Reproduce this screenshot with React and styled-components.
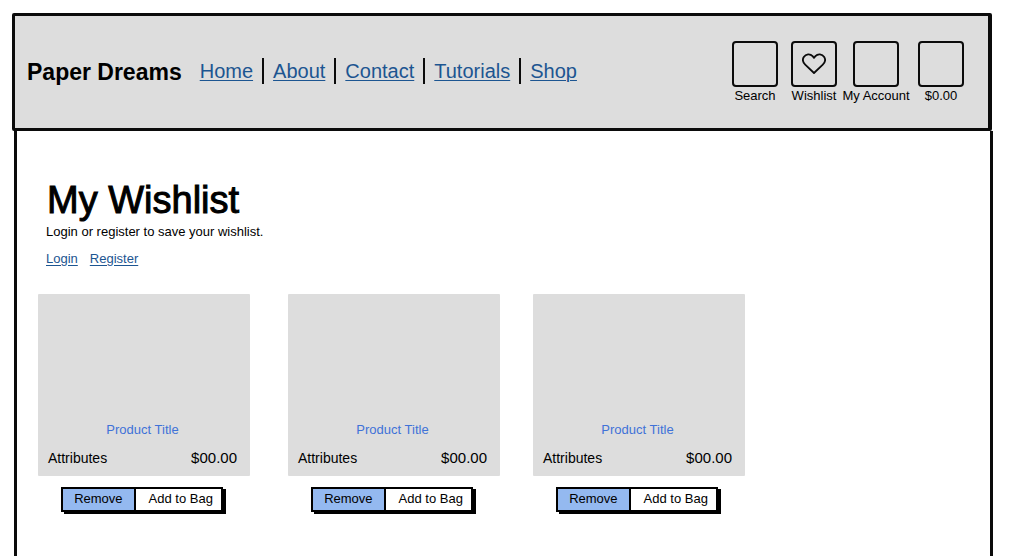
import React from "react";
import styled, { createGlobalStyle } from "styled-components";

const ink = "#0b0b0b";
const panel = "#dddddd";
const link = "#1c5591";

const GlobalStyle = createGlobalStyle`
  *, *::before, *::after { box-sizing: border-box; }
  body {
    margin: 0;
    background: #fff;
    color: #000;
    font-family: "Liberation Sans", Arial, sans-serif;
    font-size: 13px;
    line-height: 16px;
  }
`;

const Page = styled.div`
  display: flex;
  flex-direction: column;
  min-height: 100vh;
  padding: 13px 24px 0 12px;
`;

const Header = styled.header`
  display: flex;
  flex-wrap: wrap;
  align-items: flex-start;
  justify-content: space-between;
  padding: 25px 14px 24px 12px;
  border: 3px solid ${ink};
  border-right-width: 4px;
  border-radius: 2px;
  background: ${panel};
`;

const Masthead = styled.div`
  display: flex;
  flex-wrap: wrap;
  align-items: flex-start;
  gap: 18px;
  padding-top: 17px;
`;

const Brand = styled.span`
  font-size: 23px;
  line-height: 28px;
  font-weight: 700;
`;

const Nav = styled.nav`
  display: flex;
  flex-wrap: wrap;
`;

const NavLink = styled.a`
  font-size: 20px;
  line-height: 26px;
  color: ${link};
  text-decoration: underline;
  text-decoration-thickness: 1px;
  text-underline-offset: 2px;

  & + & {
    margin-left: 9px;
    padding-left: 9px;
    border-left: 2px solid ${ink};
  }
`;

const Tools = styled.div`
  display: flex;
`;

const Tool = styled.button`
  display: flex;
  flex-direction: column;
  align-items: center;
  gap: 1px;
  width: ${(p) => p.$width}px;
  padding: 0;
  border: 0;
  background: none;
  color: #000;
  font: inherit;
  white-space: nowrap;
  cursor: pointer;
`;

const IconBox = styled.span`
  display: flex;
  align-items: center;
  justify-content: center;
  width: 46px;
  height: 46px;
  border: 2px solid ${ink};
  border-radius: 4px;
`;

const Content = styled.main`
  flex: 1;
  margin: 0 -1px 0 2px;
  padding: 45px 20px 40px 21px;
  border: solid ${ink};
  border-width: 0 3px;
`;

const Intro = styled.section`
  padding-left: 8px;
`;

const Title = styled.h1`
  margin: 0;
  padding-left: 1px;
  font-size: 38px;
  line-height: 48px;
  font-weight: 400;
  -webkit-text-stroke: 1px #000;
`;

const Note = styled.p`
  margin: 0;
`;

const AccountLinks = styled.div`
  display: flex;
  gap: 12px;
  margin-top: 11px;
`;

const TextLink = styled.a`
  color: ${link};
  text-decoration: underline;
  text-underline-offset: 2px;
`;

const Products = styled.ul`
  display: flex;
  flex-wrap: wrap;
  margin: 27px 0 0;
  padding: 0;
  list-style: none;
`;

const Product = styled.li`
  display: flex;
  flex-direction: column;
  align-items: center;
  width: 212px;
  margin-right: ${(p) => p.$gap}px;
`;

const Card = styled.article`
  display: flex;
  flex-direction: column;
  justify-content: flex-end;
  width: 100%;
  height: 182px;
  padding: 0 13px 9px 10px;
  border-radius: 1px;
  background: ${panel};
`;

const ProductLink = styled.a`
  align-self: center;
  color: #3f72d8;
  text-decoration: none;
`;

const Details = styled.div`
  display: flex;
  justify-content: space-between;
  margin-top: 11px;
  font-size: 14px;
  line-height: 18px;
`;

const Price = styled.span`
  font-size: 15px;
`;

const Actions = styled.div`
  display: flex;
  margin: 11px 4px 0 0;
  border: 2px solid #000;
  background: #fff;
  box-shadow: 3px 2px 0 #000;
`;

const Action = styled.button`
  padding: ${(p) => (p.$primary ? "2px 11px 3px" : "2px 8px 3px 13px")};
  border: 0;
  border-right: ${(p) => (p.$primary ? "2px solid #000" : "0")};
  background: ${(p) => (p.$primary ? "#94b9f0" : "#fff")};
  color: #000;
  font: inherit;
  cursor: pointer;
`;

const Heart = () => (
  <svg width="24" height="22" viewBox="0 0 24 22" fill="none" stroke={ink} strokeWidth="1.8" strokeLinejoin="round" aria-hidden="true">
    <path d="M12 20 3.200 11.600C.8 9.300 .4 6.300 1.800 4C3.800 .8 8.200 .5 10.600 3.200L12 4.800L13.400 3.200C15.800 .5 20.200 .8 22.200 4C23.600 6.300 23.200 9.300 20.800 11.600Z" />
  </svg>
);

const pages = ["Home", "About", "Contact", "Tutorials", "Shop"];

const tools = [
  { label: "Search", width: 58 },
  { label: "Wishlist", width: 60, icon: <Heart /> },
  { label: "My Account", width: 64 },
  { label: "$0.00", width: 66 },
];

const products = [
  { id: 1, gap: 38 },
  { id: 2, gap: 33 },
  { id: 3, gap: 0 },
];

export default function App() {
  return (
    <>
      <GlobalStyle />
      <Page>
        <Header>
          <Masthead>
            <Brand>Paper Dreams</Brand>
            <Nav>
              {pages.map((page) => (
                <NavLink key={page} href="#">{page}</NavLink>
              ))}
            </Nav>
          </Masthead>
          <Tools>
            {tools.map((tool) => (
              <Tool key={tool.label} type="button" $width={tool.width}>
                <IconBox>{tool.icon}</IconBox>
                {tool.label}
              </Tool>
            ))}
          </Tools>
        </Header>
        <Content>
          <Intro>
            <Title>My Wishlist</Title>
            <Note>Login or register to save your wishlist.</Note>
            <AccountLinks>
              <TextLink href="#">Login</TextLink>
              <TextLink href="#">Register</TextLink>
            </AccountLinks>
          </Intro>
          <Products>
            {products.map((product) => (
              <Product key={product.id} $gap={product.gap}>
                <Card>
                  <ProductLink href="#">Product Title</ProductLink>
                  <Details>
                    <span>Attributes</span>
                    <Price>$00.00</Price>
                  </Details>
                </Card>
                <Actions>
                  <Action type="button" $primary>Remove</Action>
                  <Action type="button">Add to Bag</Action>
                </Actions>
              </Product>
            ))}
          </Products>
        </Content>
      </Page>
    </>
  );
}
